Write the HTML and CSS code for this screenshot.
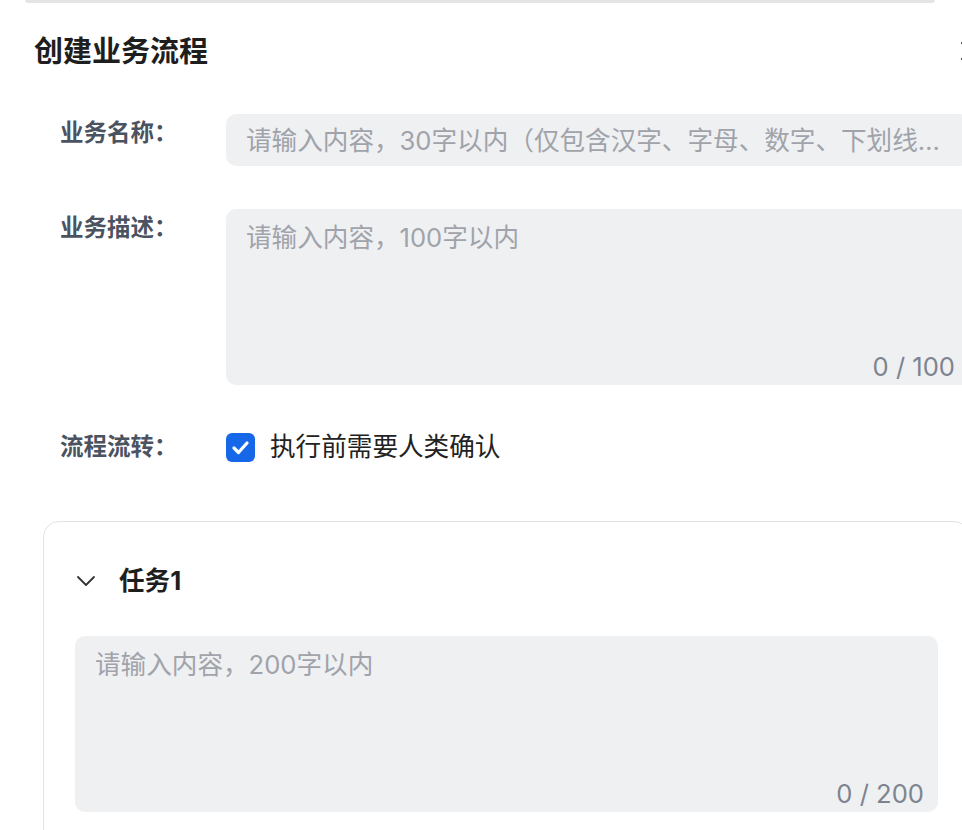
FILE: index.html
```html
<!DOCTYPE html>
<html lang="zh-CN">
<head>
    <meta charset="UTF-8">
    <meta name="viewport" content="width=device-width, initial-scale=1.0">
    <title>创建业务流程</title>
    <link rel="stylesheet" href="styles.css">
</head>
<body>
    <div class="page">
        <div class="prev-edge"></div>

        <div class="header">
            <h1 class="title">创建业务流程</h1>
            <button class="close-btn" type="button">
                <svg width="18" height="18" viewBox="0 0 18 18">
                    <path d="M1 1 L17 17 M17 1 L1 17" stroke="#333" stroke-width="2" stroke-linecap="round" fill="none"/>
                </svg>
            </button>
        </div>

        <form class="flow-form">
            <div class="form-row">
                <label class="form-label" for="flow-name">业务名称：</label>
                <input class="text-input" id="flow-name" type="text" placeholder="请输入内容，30字以内（仅包含汉字、字母、数字、下划线和中划线）">
            </div>
            <div class="form-row">
                <label class="form-label" for="flow-desc">业务描述：</label>
                <div class="textarea-box">
                    <textarea class="text-area" id="flow-desc" placeholder="请输入内容，100字以内"></textarea>
                    <span class="counter">0 / 100</span>
                </div>
            </div>
            <div class="form-row row-center">
                <span class="form-label">流程流转：</span>
                <label class="check">
                    <span class="check-box">
                        <svg width="29" height="29" viewBox="0 0 29 29">
                            <path d="M8 15 L12.5 19.5 L21 10" stroke="#fff" stroke-width="3.2" stroke-linecap="round" stroke-linejoin="round" fill="none"/>
                        </svg>
                    </span>
                    执行前需要人类确认
                </label>
            </div>
        </form>

        <div class="task-card">
            <div class="task-head">
                <svg class="chevron" width="20" height="12" viewBox="0 0 20 12">
                    <polyline points="2,2 10,10 18,2" stroke="#333" stroke-width="1.8" fill="none" stroke-linecap="round" stroke-linejoin="round"/>
                </svg>
                <span class="task-title">任务1</span>
            </div>
            <div class="textarea-box">
                <textarea class="text-area" placeholder="请输入内容，200字以内"></textarea>
                <span class="counter counter-task">0 / 200</span>
            </div>
        </div>
    </div>
</body>
</html>
```

FILE: styles.css
```css
body {
    margin: 0;
    padding: 0;
    background-color: white;
    font-family: Inter, "Noto Sans CJK SC", sans-serif;
    overflow: hidden;
}
.page {
    width: 1000px;
}
.prev-edge {
    height: 3px;
    margin: 0 65px 0 25px;
    background-color: rgb(228, 228, 230);
    border-radius: 0 0 10px 10px;
}
.header {
    display: flex;
    align-items: center;
    margin-top: 29px;
    padding: 0 21px 0 34px;
    height: 40px;
}
.title {
    margin: 0;
    font-size: 29px;
    line-height: 40px;
    font-weight: 700;
    color: rgb(30, 30, 30);
}
.close-btn {
    margin-left: auto;
    padding: 0;
    border: none;
    background: none;
    width: 18px;
    height: 18px;
    margin-top: -3px;
}
.flow-form {
    margin-top: 42px;
    padding: 0 30px 0 60px;
}
.form-row {
    display: grid;
    grid-template-columns: 166px 1fr;
    align-items: start;
    margin-bottom: 43px;
}
.form-row.row-center {
    align-items: center;
    margin-top: 45px;
    margin-bottom: 0;
}
.form-label {
    padding-top: 2px;
    font-size: 23.5px;
    line-height: 33.6px;
    font-weight: 700;
    color: rgb(75, 83, 97);
}
.row-center .form-label {
    padding-top: 0;
}
.text-input {
    box-sizing: border-box;
    width: 100%;
    height: 52px;
    padding: 0 20px;
    border: none;
    border-radius: 10px;
    background-color: rgb(239, 240, 242);
    font-family: inherit;
    font-size: 25.6px;
    color: rgb(40, 40, 40);
    outline: none;
    text-overflow: ellipsis;
}
.text-input::placeholder,
.text-area::placeholder {
    color: rgb(160, 163, 170);
}
.textarea-box {
    position: relative;
}
.text-area {
    display: block;
    box-sizing: border-box;
    width: 100%;
    height: 176px;
    padding: 10px 20px;
    border: none;
    border-radius: 10px;
    background-color: rgb(239, 240, 242);
    font-family: inherit;
    font-size: 25.6px;
    line-height: 38px;
    resize: none;
    outline: none;
}
.counter {
    position: absolute;
    right: 15px;
    bottom: 1px;
    font-size: 25.6px;
    line-height: 34px;
    color: rgb(125, 132, 143);
}
.counter-task {
    right: 14px;
    bottom: 1px;
}
.check {
    display: flex;
    align-items: center;
    gap: 15px;
    font-size: 25.6px;
    line-height: 34px;
    color: rgb(34, 34, 34);
}
.check-box {
    display: block;
    width: 29px;
    height: 29px;
    border-radius: 6px;
    background-color: rgb(23, 104, 232);
}
.check-box svg {
    display: block;
}
.task-card {
    margin: 57px 30px 0 43px;
    padding: 0 31px 40px 31px;
    border: 1.5px solid rgb(226, 227, 232);
    border-radius: 16px;
}
.task-head {
    display: flex;
    align-items: center;
    padding-top: 40px;
    height: 38px;
    margin-bottom: 36px;
}
.chevron {
    margin-left: 1px;
    margin-right: 23px;
}
.task-title {
    font-size: 25.6px;
    line-height: 38px;
    font-weight: 700;
    color: rgb(30, 30, 30);
}
```
